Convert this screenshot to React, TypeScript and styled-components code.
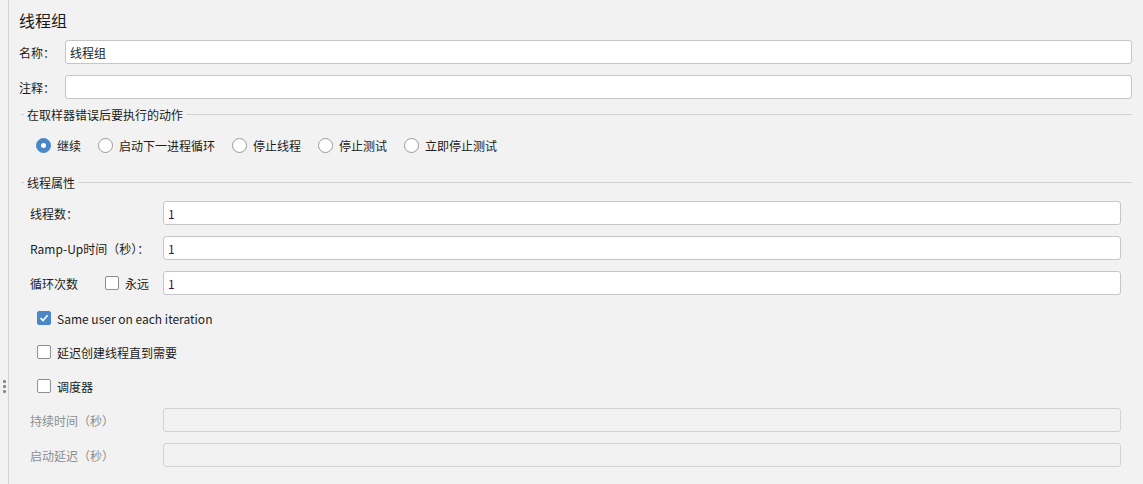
import React from 'react'
import styled, { createGlobalStyle } from 'styled-components'

const font = '"Noto Sans CJK SC", "Microsoft YaHei", "Noto Sans", sans-serif'

const GlobalStyle = createGlobalStyle`
  html, body {
    margin: 0;
    padding: 0;
    background: #f2f2f2;
  }
  body {
    font-family: ${font};
    font-size: 12px;
    color: #1c1c1c;
  }
`

const Page = styled.div`
  display: flex;
  width: 1143px;
  height: 484px;
  overflow: hidden;
  background: #f2f2f2;
`

const Splitter = styled.div`
  width: 9px;
  border-right: 1px solid #d4d4d4;
  display: flex;
  flex-direction: column;
  justify-content: center;
  align-items: center;
  gap: 2px;
  padding-top: 288px;
  box-sizing: border-box;
`

const Dot = styled.span`
  width: 3px;
  height: 3px;
  border-radius: 1px;
  background: #8a8a8a;
`

const Main = styled.div`
  flex: 1;
  padding: 8px 11px 0 10px;
  display: flex;
  flex-direction: column;
`

const Title = styled.div`
  font-size: 16px;
  line-height: 24px;
  height: 24px;
  color: #1a1a1a;
`

const Row = styled.div<{ $top?: number; $label?: number }>`
  display: flex;
  align-items: center;
  height: 24px;
  margin-top: ${(p) => p.$top ?? 11}px;

  & > .field-label {
    width: ${(p) => p.$label ?? 45}px;
    flex: none;
  }
`

const Label = styled.label<{ $disabled?: boolean }>`
  color: ${(p) => (p.$disabled ? '#8e8e8e' : '#1c1c1c')};
  white-space: nowrap;
  display: flex;
  align-items: center;
`

const Input = styled.input`
  flex: 1;
  min-width: 0;
  height: 24px;
  box-sizing: border-box;
  border: 1px solid #c6c6c6;
  border-radius: 3px;
  background: #ffffff;
  padding: 0 4px;
  font-family: ${font};
  font-size: 12px;
  color: #1c1c1c;
  outline: none;

  &.num {
    color: #4e0a50;
  }

  &:disabled {
    background: #f2f2f2;
    border-color: #d2d2d2;
  }
`

const Fieldset = styled.div<{ $top: number }>`
  margin-top: ${(p) => p.$top}px;
  margin-left: 2px;
  display: flex;
  flex-direction: column;
`

const Legend = styled.div`
  display: flex;
  align-items: center;
  height: 16px;
  gap: 3px;

  &::before {
    content: '';
    width: 3px;
    height: 1px;
    background: #d0d0d0;
  }
  &::after {
    content: '';
    flex: 1;
    height: 1px;
    background: #d0d0d0;
  }
`

const RadioRow = styled.div`
  display: flex;
  align-items: center;
  height: 20px;
  margin-top: 13px;
  padding-left: 15px;
  gap: 17px;
`

const Choice = styled.label`
  display: flex;
  align-items: center;
  gap: 6px;
  white-space: nowrap;
`

const RadioMark = styled.span<{ $on?: boolean }>`
  width: 15px;
  height: 15px;
  box-sizing: border-box;
  border-radius: 50%;
  border: 1px solid ${(p) => (p.$on ? '#4a87c9' : '#9a9a9a')};
  background: ${(p) => (p.$on ? '#4a87c9' : '#ffffff')};
  display: flex;
  align-items: center;
  justify-content: center;

  &::after {
    content: '';
    display: ${(p) => (p.$on ? 'block' : 'none')};
    width: 5px;
    height: 5px;
    border-radius: 50%;
    background: #ffffff;
  }
`

const Box = styled.span<{ $on?: boolean }>`
  width: 14px;
  height: 14px;
  box-sizing: border-box;
  border-radius: 2px;
  border: 1px solid ${(p) => (p.$on ? '#4a87c9' : '#8f8f8f')};
  background: ${(p) => (p.$on ? '#4a87c9' : '#ffffff')};
  display: flex;
  align-items: center;
  justify-content: center;
`

const Inner = styled.div`
  display: flex;
  flex-direction: column;
  padding: 0 11px 0 9px;
`

const CheckRow = styled.div<{ $top: number }>`
  display: flex;
  align-items: center;
  height: 20px;
  margin-top: ${(p) => p.$top}px;
  padding-left: 7px;
`

const LoopCell = styled.div`
  display: flex;
  align-items: center;
  white-space: nowrap;
`

const LoopText = styled.span`
  width: 75px;
  flex: none;
`

const Check = ({ on }: { on?: boolean }) => (
  <Box $on={on}>
    {on && (
      <svg width="10" height="10" viewBox="0 0 10 10">
        <path d="M1.5 5.2 L4 7.6 L8.6 2.2" fill="none" stroke="#fff" strokeWidth="1.6" />
      </svg>
    )}
  </Box>
)

const radios = ['继续', '启动下一进程循环', '停止线程', '停止测试', '立即停止测试']

export default function App() {
  return (
    <Page>
      <GlobalStyle />
      <Splitter>
        <Dot />
        <Dot />
        <Dot />
      </Splitter>
      <Main>
        <Title>线程组</Title>
        <Row $top={8} $label={46}>
          <Label className="field-label">名称：</Label>
          <Input defaultValue="线程组" />
        </Row>
        <Row $label={46}>
          <Label className="field-label">注释：</Label>
          <Input defaultValue="" />
        </Row>

        <Fieldset $top={7}>
          <Legend>在取样器错误后要执行的动作</Legend>
          <RadioRow>
            {radios.map((r, i) => (
              <Choice key={r}>
                <RadioMark $on={i === 0} />
                {r}
              </Choice>
            ))}
          </RadioRow>
        </Fieldset>

        <Fieldset $top={19}>
          <Legend>线程属性</Legend>
          <Inner>
            <Row $top={11} $label={133}>
              <Label className="field-label">线程数：</Label>
              <Input className="num" defaultValue="1" />
            </Row>
            <Row $label={133}>
              <Label className="field-label">Ramp-Up时间（秒）：</Label>
              <Input className="num" defaultValue="1" />
            </Row>
            <Row $label={133}>
              <LoopCell className="field-label">
                <LoopText>循环次数</LoopText>
                <Choice>
                  <Check />
                  永远
                </Choice>
              </LoopCell>
              <Input className="num" defaultValue="1" />
            </Row>
            <CheckRow $top={13}>
              <Choice>
                <Check on />
                Same user on each iteration
              </Choice>
            </CheckRow>
            <CheckRow $top={14}>
              <Choice>
                <Check />
                延迟创建线程直到需要
              </Choice>
            </CheckRow>
            <CheckRow $top={14}>
              <Choice>
                <Check />
                调度器
              </Choice>
            </CheckRow>
            <Row $top={12} $label={133}>
              <Label className="field-label" $disabled>持续时间（秒）</Label>
              <Input disabled />
            </Row>
            <Row $label={133}>
              <Label className="field-label" $disabled>启动延迟（秒）</Label>
              <Input disabled />
            </Row>
          </Inner>
        </Fieldset>
      </Main>
    </Page>
  )
}
